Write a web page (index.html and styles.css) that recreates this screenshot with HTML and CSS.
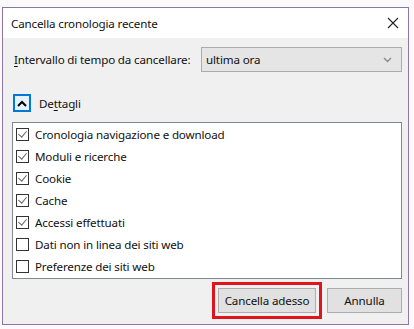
FILE: index.html
```html
<!DOCTYPE html>
<html lang="it">
<head>
    <meta charset="UTF-8">
    <title>Cancella cronologia recente</title>
    <link rel="stylesheet" href="styles.css">
</head>
<body>

<div class="window">
    <div class="titlebar">
        <span class="title">Cancella cronologia recente</span>
        <svg class="close" width="12" height="12" viewBox="0 0 12 12">
            <path d="M1 1 L11 11 M11 1 L1 11" stroke="#222" stroke-width="1.1" fill="none"/>
        </svg>
    </div>

    <div class="content">
        <div class="range-row">
            <label class="range-label"><u>I</u>ntervallo di tempo da cancellare:</label>
            <div class="select">
                <span>ultima ora</span>
                <svg width="9" height="6" viewBox="0 0 9 6">
                    <path d="M1 1 L4.5 4.5 L8 1" stroke="#8a8a8a" stroke-width="1.4" fill="none"/>
                </svg>
            </div>
        </div>

        <div class="details-row">
            <span class="toggle">
                <svg width="10" height="7" viewBox="0 0 10 7">
                    <path d="M1 6 L5 2 L9 6" stroke="#000" stroke-width="2" fill="none"/>
                </svg>
            </span>
            <span>De<u>t</u>tagli</span>
        </div>

        <div class="list">
            <div class="item"><span class="check on"></span>Cronologia navigazione e download</div>
            <div class="item"><span class="check on"></span>Moduli e ricerche</div>
            <div class="item"><span class="check on"></span>Cookie</div>
            <div class="item"><span class="check on"></span>Cache</div>
            <div class="item"><span class="check on"></span>Accessi effettuati</div>
            <div class="item"><span class="check"></span>Dati non in linea dei siti web</div>
            <div class="item"><span class="check"></span>Preferenze dei siti web</div>
        </div>

        <div class="buttons">
            <div class="highlight"><button class="btn wide">Cancella adesso</button></div>
            <button class="btn">Annulla</button>
        </div>
    </div>
</div>

</body>
</html>
```

FILE: styles.css
```css
body {
    margin: 0;
    background-color: #fcf9fc;
    font-family: "Noto Sans", "Open Sans", sans-serif;
    font-size: 11.6px;
    letter-spacing: -0.15px;
    color: #111;
}

.window {
    margin: 7px 0 0 2px;
    width: 405px;
    height: 316px;
    border: 1px solid #8c76a4;
    background-color: #f0f0f0;
    display: flex;
    flex-direction: column;
}

.titlebar {
    height: 30px;
    background-color: #fff;
    display: flex;
    align-items: center;
    justify-content: space-between;
    padding: 0 9px 0 8px;
}

.close {
    display: block;
}

.content {
    flex: 1;
    display: flex;
    flex-direction: column;
    padding: 9px 6px 0 9px;
}

.range-row {
    display: flex;
    align-items: center;
    height: 25px;
}

.range-label {
    width: 187px;
    flex-shrink: 0;
    white-space: nowrap;
    padding-left: 2px;
}

u {
    text-decoration-thickness: 1px;
    text-underline-offset: 2px;
}

.select {
    flex: 1;
    height: 23px;
    border: 1px solid #acacac;
    background-color: #e5e5e5;
    display: flex;
    align-items: center;
    justify-content: space-between;
    padding: 0 9px 0 4px;
}

.details-row {
    display: flex;
    align-items: center;
    gap: 8px;
    margin-top: 22px;
    height: 18px;
}

.toggle {
    width: 14px;
    height: 14px;
    border: 2px solid #0078d7;
    background-color: #e5f1fb;
    display: flex;
    align-items: center;
    justify-content: center;
    margin-left: 1px;
}

.list {
    margin-top: 10px;
    height: 155px;
    border: 1px solid #828790;
    background-color: #fff;
}

.item {
    height: 22px;
    display: flex;
    align-items: center;
    gap: 6px;
    padding-left: 3px;
}

.check {
    width: 11px;
    height: 11px;
    border: 1px solid #333;
    background-color: #fff;
    position: relative;
}

.check.on::after {
    content: "";
    position: absolute;
    left: 3px;
    top: 0px;
    width: 4px;
    height: 7px;
    border-right: 1.5px solid #666;
    border-bottom: 1.5px solid #666;
    transform: rotate(40deg);
}

.buttons {
    display: flex;
    justify-content: flex-end;
    align-items: center;
    gap: 5px;
    margin-top: 3px;
}

.highlight {
    border: 3px solid #e0141e;
    padding: 3px;
}

.btn {
    font-family: inherit;
    font-size: 11.6px;
    letter-spacing: -0.15px;
    height: 25px;
    width: 75px;
    border: 1px solid #adadad;
    background-color: #e1e1e1;
    color: #111;
    padding: 0;
}

.btn.wide {
    width: 98px;
    display: block;
}
```
